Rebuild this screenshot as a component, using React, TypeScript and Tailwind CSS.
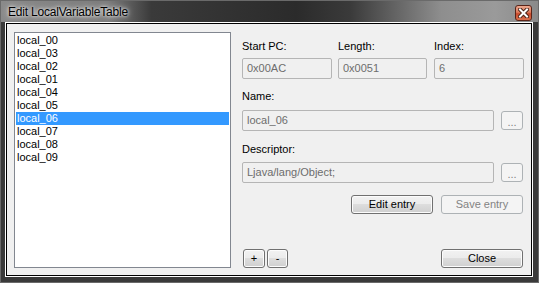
import React from "react";

const items = ["local_00","local_03","local_02","local_01","local_04","local_05","local_06","local_07","local_08","local_09"];

const btn = "rounded-[3px] border border-[#707070] bg-[linear-gradient(#f2f2f2_0%,#ebebeb_49%,#dddddd_50%,#cfcfcf_100%)] shadow-[inset_0_0_0_1px_#fcfcfc] text-[11px] leading-none text-black flex items-center justify-center";
const btnDis = "rounded-[3px] border border-[#adb2b5] bg-[#f4f4f4] text-[11px] leading-none text-[#838383] flex items-center justify-center";
const input = "h-[21px] rounded-[2px] border border-[#b5b5b5] bg-[#f0f0f0] text-[11px] text-[#6d6d6d] flex items-center pl-[4px]";
const label = "h-[13px] leading-[13px] text-[11px] text-black";

export default function App() {
  return (
    <div className="w-[539px] h-[283px] bg-[#3a3a3a] border border-[#6a6a6a] flex flex-col font-['Liberation_Sans',Arial,sans-serif]">
      <div className="h-[21px] flex items-start justify-between bg-[linear-gradient(to_right,#8a8a8a_0%,#7c7c7c_20%,#3a3a3a_28%,#2b2b2b_55%,#3a3a3a_65%,#8e8e8e_82%,#9a9a9a_92%,#8a8a8a_100%)]">
        <span className="mt-[4px] ml-[7px] text-[12px] leading-[15px] tracking-[-0.2px] text-black [text-shadow:0_0_6px_#fff,0_0_3px_#fff]">Edit LocalVariableTable</span>
        <div className="mt-[4px] mr-[6px] w-[17px] h-[16px] rounded-[3px] border border-[#5a2418] bg-[linear-gradient(#eca88f_0%,#dd7a5c_45%,#c84a2c_55%,#d8704f_100%)] flex items-center justify-center">
          <svg width="11" height="10" viewBox="0 0 11 10">
            <path d="M2 1.5 L9 8.5 M9 1.5 L2 8.5" stroke="#4a2418" strokeWidth="4" strokeLinecap="square" />
            <path d="M2 1.5 L9 8.5 M9 1.5 L2 8.5" stroke="#ffffff" strokeWidth="2" strokeLinecap="square" />
          </svg>
        </div>
      </div>
      <div className="ml-[4px] mr-[5px] mb-[5px] flex-1 border border-white">
        <div className="h-full border border-black bg-[#f0f0f0] flex pl-[7px] pr-[6px] pt-[8px] pb-[7px]">
          <div className="w-[217px] h-full border border-[#828790] bg-white p-[1px]">
            {items.map((it) => (
              <div key={it} className={"h-[13px] leading-[13px] text-[11px] pl-[1px] " + (it === "local_06" ? "bg-[#3399ff] text-white" : "text-black")}>{it}</div>
            ))}
          </div>
          <div className="ml-[11px] w-[282px] flex flex-col">
            <div className="mt-[8px] flex">
              <div className="w-[90px] flex flex-col">
                <div className={label}>Start PC:</div>
                <div className={input + " mt-[5px]"}>0x00AC</div>
              </div>
              <div className="ml-[6px] w-[89px] flex flex-col">
                <div className={label}>Length:</div>
                <div className={input + " mt-[5px]"}>0x0051</div>
              </div>
              <div className="ml-[7px] w-[90px] flex flex-col">
                <div className={label}>Index:</div>
                <div className={input + " mt-[5px]"}>6</div>
              </div>
            </div>
            <div className={label + " mt-[11px]"}>Name:</div>
            <div className="mt-[7px] flex items-center justify-between pr-[1px]">
              <div className={input + " w-[252px]"}>local_06</div>
              <div className={btnDis + " w-[22px] h-[19px] pt-[4px]"}>...</div>
            </div>
            <div className={label + " mt-[12px]"}>Descriptor:</div>
            <div className="mt-[6px] flex items-center justify-between pr-[1px]">
              <div className={input + " w-[252px]"}>Ljava/lang/Object;</div>
              <div className={btnDis + " w-[22px] h-[19px] pt-[4px]"}>...</div>
            </div>
            <div className="mt-[12px] flex justify-end gap-[8px] pr-[1px]">
              <div className={btn + " w-[82px] h-[19px] border-[#3c3c3c]"}>Edit entry</div>
              <div className={btnDis + " w-[82px] h-[19px]"}>Save entry</div>
            </div>
            <div className="flex-1" />
            <div className="flex items-end justify-between pr-[1px]">
              <div className="flex gap-[2px] ml-[1px]">
                <div className={btn + " w-[22px] h-[19px]"}>+</div>
                <div className={btn + " w-[21px] h-[19px]"}>-</div>
              </div>
              <div className={btn + " w-[82px] h-[19px]"}>Close</div>
            </div>
          </div>
        </div>
      </div>
    </div>
  );
}
